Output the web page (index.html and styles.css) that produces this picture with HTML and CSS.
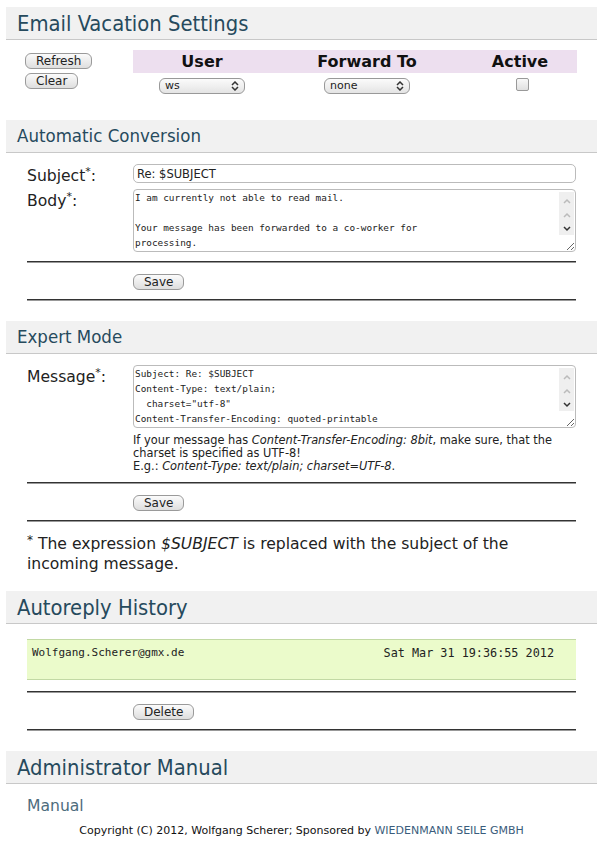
FILE: index.html
```html
<!DOCTYPE html>
<html lang="en">
<head>
    <meta charset="UTF-8">
    <title>Email Vacation Settings</title>
    <link rel="stylesheet" href="styles.css">
</head>
<body>
    <div class="page">
        <h1 class="bar bar-lg">Email Vacation Settings</h1>
        <div class="settings">
            <div class="actions">
                <button class="btn">Refresh</button>
                <button class="btn">Clear</button>
            </div>
            <table class="users">
                <colgroup>
                    <col class="col-user">
                    <col class="col-fwd">
                    <col class="col-active">
                </colgroup>
                <thead>
                    <tr><th>User</th><th>Forward To</th><th>Active</th></tr>
                </thead>
                <tbody>
                    <tr>
                        <td>
                            <span class="select">
                                <select><option>ws</option></select>
                                <svg class="updown" viewBox="0 0 8 10" width="8" height="10"><path d="M1 4 L4 1 L7 4 M1 6 L4 9 L7 6" fill="none" stroke="#333" stroke-width="1.5"/></svg>
                            </span>
                        </td>
                        <td>
                            <span class="select">
                                <select><option>none</option></select>
                                <svg class="updown" viewBox="0 0 8 10" width="8" height="10"><path d="M1 4 L4 1 L7 4 M1 6 L4 9 L7 6" fill="none" stroke="#333" stroke-width="1.5"/></svg>
                            </span>
                        </td>
                        <td><input type="checkbox" class="check"></td>
                    </tr>
                </tbody>
            </table>
        </div>

        <h2 class="bar bar-sm">Automatic Conversion</h2>
        <div class="form">
            <div class="row">
                <label class="label">Subject<sup>*</sup>:</label>
                <input type="text" class="text" value="Re: $SUBJECT">
            </div>
            <div class="row">
                <label class="label">Body<sup>*</sup>:</label>
                <div class="area">
                    <textarea class="mono" rows="4">I am currently not able to read mail.

Your message has been forwarded to a co-worker for
processing.

Best regards</textarea>
                    <div class="scroll">
                        <svg viewBox="0 0 8 6" width="8" height="6"><path d="M1 5 L4 2 L7 5" fill="none" stroke="#bbb" stroke-width="1.5"/></svg>
                        <svg viewBox="0 0 8 6" width="8" height="6"><path d="M1 5 L4 2 L7 5" fill="none" stroke="#bbb" stroke-width="1.5"/></svg>
                        <svg viewBox="0 0 8 6" width="8" height="6"><path d="M1 1 L4 4 L7 1" fill="none" stroke="#333" stroke-width="1.5"/></svg>
                    </div>
                </div>
            </div>
            <hr class="rule">
            <div class="row">
                <span></span>
                <div class="buttons"><button class="btn">Save</button></div>
            </div>
            <hr class="rule">
        </div>

        <h2 class="bar bar-sm">Expert Mode</h2>
        <div class="form">
            <div class="row">
                <label class="label">Message<sup>*</sup>:</label>
                <div>
                    <div class="area">
                        <textarea class="mono" rows="4">Subject: Re: $SUBJECT
Content-Type: text/plain;
  charset="utf-8"
Content-Transfer-Encoding: quoted-printable

I am currently not able to read mail.</textarea>
                        <div class="scroll">
                            <svg viewBox="0 0 8 6" width="8" height="6"><path d="M1 5 L4 2 L7 5" fill="none" stroke="#bbb" stroke-width="1.5"/></svg>
                            <svg viewBox="0 0 8 6" width="8" height="6"><path d="M1 5 L4 2 L7 5" fill="none" stroke="#bbb" stroke-width="1.5"/></svg>
                            <svg viewBox="0 0 8 6" width="8" height="6"><path d="M1 1 L4 4 L7 1" fill="none" stroke="#333" stroke-width="1.5"/></svg>
                        </div>
                    </div>
                    <p class="hint">If your message has <em>Content-Transfer-Encoding: 8bit</em>, make sure, that the charset is specified as UTF-8!<br>E.g.: <em>Content-Type: text/plain; charset=UTF-8</em>.</p>
                </div>
            </div>
            <hr class="rule">
            <div class="row">
                <span></span>
                <div class="buttons"><button class="btn">Save</button></div>
            </div>
            <hr class="rule">
        </div>

        <p class="footnote"><sup>*</sup> The expression <em>$SUBJECT</em> is replaced with the subject of the incoming message.</p>

        <h1 class="bar bar-lg">Autoreply History</h1>
        <div class="form">
            <div class="history">
                <span class="who">Wolfgang.Scherer@gmx.de</span>
                <span class="when">Sat Mar 31 19:36:55 2012</span>
            </div>
            <hr class="rule">
            <div class="row">
                <span></span>
                <div class="buttons"><button class="btn">Delete</button></div>
            </div>
            <hr class="rule">
        </div>

        <h1 class="bar bar-lg">Administrator Manual</h1>
        <div class="form">
            <a class="manual" href="#">Manual</a>
        </div>

        <p class="copyright">Copyright (C) 2012, Wolfgang Scherer; Sponsored by <a href="#">WIEDENMANN SEILE GMBH</a></p>
    </div>
</body>
</html>
```

FILE: styles.css
```css
* {
    box-sizing: border-box;
}

body {
    margin: 0;
    font-family: 'DejaVu Sans', Verdana, sans-serif;
    font-size: 15.6px;
    color: #222;
    background: #fff;
}

.page {
    padding: 7px 4px 0 6px;
}

/* section headings */
.bar {
    margin: 0;
    padding: 0 11px;
    background: #f1f1f1;
    border-bottom: 1px solid #c8c8c8;
    color: #264a5d;
    font-family: 'DejaVu Sans Condensed', 'DejaVu Sans', sans-serif;
    font-weight: normal;
}

.bar-lg {
    height: 33px;
    line-height: 33px;
    font-size: 21.8px;
}

.bar-sm {
    height: 33px;
    line-height: 32px;
    font-size: 18.5px;
}

/* buttons */
.btn {
    display: inline-block;
    height: 16px;
    padding: 0 10px;
    font-family: 'DejaVu Sans', sans-serif;
    font-size: 12px;
    line-height: 14px;
    color: #222;
    background: linear-gradient(#fbfbfb, #dedede);
    border: 1px solid #9a9a9a;
    border-radius: 6px;
}

.buttons {
    display: flex;
}

/* top settings */
.settings {
    display: flex;
    padding: 10px 20px 0 19px;
    margin-bottom: 26px;
}

.actions {
    width: 108px;
    display: flex;
    flex-direction: column;
    align-items: flex-start;
    gap: 4px;
    padding-top: 3px;
}

.users {
    width: 444px;
    border-collapse: collapse;
}

.col-user { width: 138px; }
.col-fwd { width: 192px; }
.col-active { width: 114px; }

.users th {
    height: 23px;
    padding: 0;
    background: #eddfef;
    font-family: 'DejaVu Sans', sans-serif;
    font-size: 16px;
    font-weight: bold;
    color: #111;
}

.users td {
    padding: 5px 0 0;
    text-align: center;
    vertical-align: top;
    line-height: 0;
}

.select {
    position: relative;
    display: inline-block;
}

.select select {
    appearance: none;
    -webkit-appearance: none;
    display: block;
    width: 86px;
    height: 16px;
    margin: 0;
    padding: 0 0 0 5px;
    font-family: 'DejaVu Sans', sans-serif;
    font-size: 11px;
    line-height: 14px;
    color: #222;
    background: linear-gradient(#fbfbfb, #e4e4e4);
    border: 1px solid #999;
    border-radius: 6px;
}

.updown {
    position: absolute;
    right: 6px;
    top: 3px;
    pointer-events: none;
}

.check {
    appearance: none;
    -webkit-appearance: none;
    width: 13px;
    height: 13px;
    margin: 0;
    border: 1px solid #999;
    border-radius: 2px;
    background: linear-gradient(#f8f8f8, #e0e0e0);
    position: relative;
    left: 2px;
}

/* form sections */
.form {
    padding: 11px 21px 0;
}

.row {
    display: grid;
    grid-template-columns: 106px 443px;
    align-items: start;
    margin-bottom: 6px;
}

.label {
    font-size: 15.6px;
    line-height: 18px;
    padding-top: 3px;
    margin-bottom: -2px;
    color: #222;
}

sup {
    font-size: 11px;
    line-height: 0;
    vertical-align: 6px;
}

.text {
    height: 19px;
    padding: 0 3px;
    font-family: 'DejaVu Sans', sans-serif;
    font-size: 11.5px;
    color: #222;
    border: 1px solid #bbb;
    border-radius: 5px;
    outline: none;
}

.area {
    position: relative;
}

.mono {
    display: block;
    width: 443px;
    height: 63px;
    padding: 0 20px 2px 1px;
    font-family: 'DejaVu Sans Mono', monospace;
    font-size: 9.4px;
    line-height: 15px;
    color: #222;
    border: 1px solid #bbb;
    border-radius: 4px;
    overflow: hidden;
    resize: both;
    outline: none;
}

.scroll {
    position: absolute;
    top: 3px;
    right: 2px;
    width: 15px;
    height: 43px;
    background: #efefef;
    display: flex;
    flex-direction: column;
    align-items: center;
    gap: 8px;
    padding-top: 6px;
}

.hint {
    margin: 6px 0 0;
    font-family: 'DejaVu Sans', sans-serif;
    font-size: 11.4px;
    line-height: 13px;
    color: #222;
}

.rule {
    margin: 10px 0 11px;
    border: 0;
    border-top: 1px solid #333;
    border-bottom: 1px solid #999;
    height: 0;
}

.form .rule + .row {
    margin-bottom: 0;
}

.form .row + .rule {
    margin-top: 9px;
}

.form .rule:last-child {
    margin: 9px 0 20px;
}

.footnote {
    margin: -8px 0 17px;
    padding: 0 21px;
    max-width: 560px;
    font-size: 15.6px;
    line-height: 20px;
    color: #222;
}

.footnote sup {
    font-size: 12px;
    vertical-align: 5px;
}

/* history */
.history {
    display: flex;
    justify-content: space-between;
    height: 41px;
    margin-top: 4px;
    padding: 6px 22px 0 5px;
    background: #ebfbcb;
    border-top: 1px solid #c2d9a4;
    border-bottom: 1px solid #c2d9a4;
    font-family: 'DejaVu Sans Mono', monospace;
    color: #222;
}

.history + .rule {
    margin-top: 11px;
}

.who {
    font-size: 11px;
}

.when {
    font-size: 11.8px;
}

.manual {
    display: inline-block;
    margin-top: 2px;
    font-size: 15.6px;
    line-height: 18px;
    color: #4d6c7d;
    text-decoration: none;
}

.copyright {
    margin: 9px 0 0;
    text-align: center;
    font-family: 'DejaVu Sans', sans-serif;
    font-size: 11px;
    color: #111;
}

.copyright a {
    color: #3a5c7c;
    text-decoration: none;
}
```
